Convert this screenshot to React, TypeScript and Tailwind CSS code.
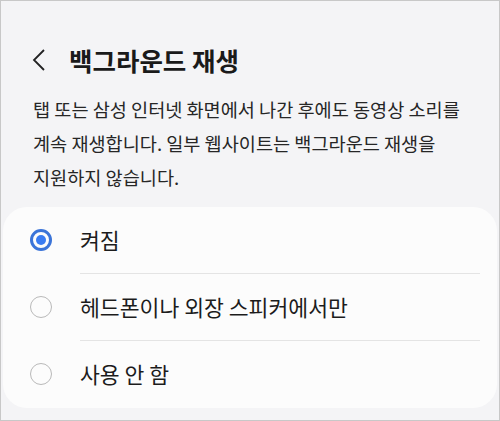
const options = ["켜짐", "헤드폰이나 외장 스피커에서만", "사용 안 함"];

const Radio = ({ checked }: { checked: boolean }) =>
  checked ? (
    <div className="w-[22px] h-[22px] rounded-full border-[3px] border-[#3b74d8] flex items-center justify-center shrink-0">
      <div className="w-[10px] h-[10px] rounded-full bg-[#3a7cf2]" />
    </div>
  ) : (
    <div className="w-[22px] h-[22px] rounded-full border-[1.5px] border-[#b9b9b9] shrink-0" />
  );

export default function App() {
  return (
    <div
      className="w-[500px] h-[421px] border border-[#c8c8c8] bg-[#f4f4f6] overflow-hidden"
      style={{ fontFamily: '"Noto Sans CJK KR", "Noto Sans", sans-serif' }}
    >
      <div className="flex items-center h-[32px] mt-[43px] pl-[31px]">
        <svg width="14" height="24" viewBox="0 0 14 24" className="shrink-0">
          <polyline points="12,2 2,12 12,22" fill="none" stroke="#222" strokeWidth="1.8" />
        </svg>
        <h1 className="ml-[23px] text-[25.5px] font-bold text-[#1a1a1a] leading-[32px]">백그라운드 재생</h1>
      </div>
      <p className="mt-[16px] pl-[32px] text-[18.6px] leading-[34px] text-[#262626] whitespace-nowrap">
        탭 또는 삼성 인터넷 화면에서 나간 후에도 동영상 소리를
        <br />
        계속 재생합니다. 일부 웹사이트는 백그라운드 재생을
        <br />
        지원하지 않습니다.
      </p>
      <div className="mt-[13px] mx-[2px] bg-[#fcfcfc] rounded-[24px]">
        {options.map((o, i) => (
          <div key={o}>
            <div className="h-[66px] flex items-center pl-[27px]">
              <Radio checked={i === 0} />
              <span className="ml-[28px] text-[21.6px] text-[#1c1c1c]">{o}</span>
            </div>
            {i < options.length - 1 ? (
              <div className="h-px bg-[#e4e4e4] ml-[77px] mr-[17px]" />
            ) : (
              <div className="h-px" />
            )}
          </div>
        ))}
      </div>
    </div>
  );
}
